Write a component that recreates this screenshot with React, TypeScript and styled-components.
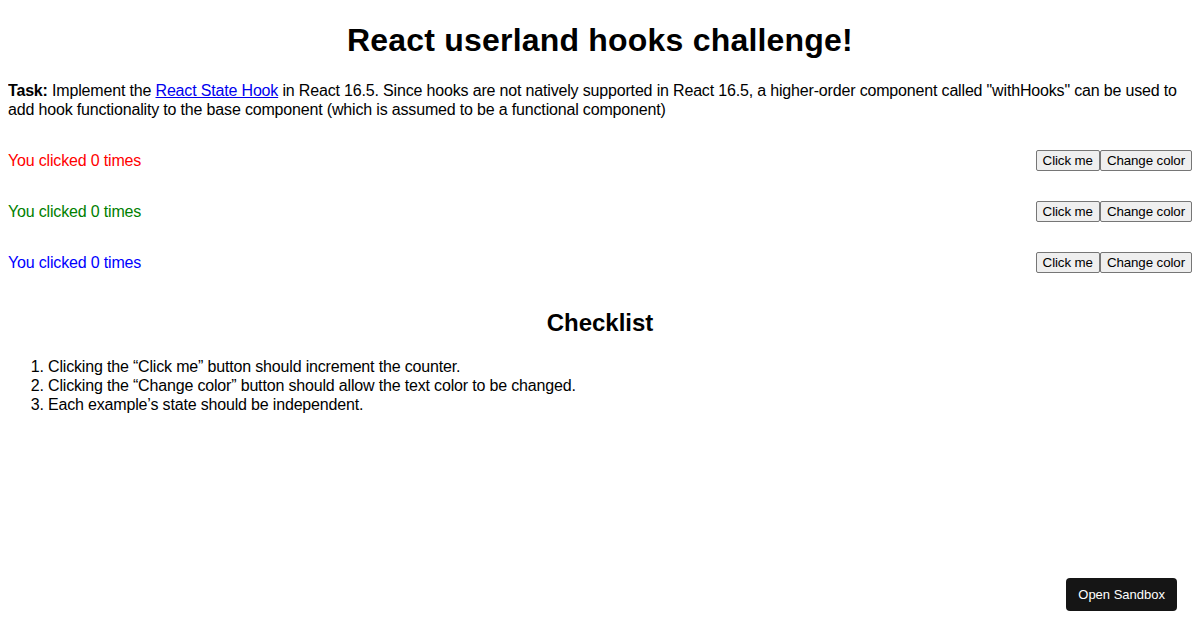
import React, { useState } from "react";
import styled, { createGlobalStyle } from "styled-components";

const GlobalStyle = createGlobalStyle`
  body {
    margin: 8px;
    font-family: "Liberation Sans", Arial, sans-serif;
    font-size: 16px;
    letter-spacing: -0.17px;
    color: #000;
    background: #fff;
  }
`;

const Title = styled.h1`
  text-align: center;
  font-size: 32px;
  letter-spacing: 0.2px;
  margin: 14.44px 0 21.44px;
`;

const Task = styled.p`
  margin: 16px 0;
  line-height: 19px;
`;

const Link = styled.a`
  color: #0000ee;
`;

const Row = styled.div`
  display: flex;
  justify-content: space-between;
  align-items: center;
`;

const Counter = styled.p<{ $color: string }>`
  margin: 16px 0;
  color: ${(p) => p.$color};
  line-height: 19px;
`;

const Buttons = styled.div`
  display: flex;
`;

const Button = styled.button`
  font-family: "Liberation Sans", Arial, sans-serif;
  font-size: 13.333px;
  letter-spacing: -0.1px;
  padding: 2px 6px;
  border: 1px solid #767676;
  border-radius: 2px;
  background: #efefef;
  color: #000;
  line-height: normal;
  cursor: pointer;
`;

const Subtitle = styled.h2`
  text-align: center;
  font-size: 24px;
  letter-spacing: 0;
  margin: 20.92px 0 19.92px;
`;

const List = styled.ol`
  margin: 16px 0;
  padding-left: 40px;
  line-height: 19px;
`;

const SandboxButton = styled.a`
  position: fixed;
  right: 23px;
  bottom: 19px;
  background: #151515;
  color: #fff;
  font-family: "Liberation Sans", Arial, sans-serif;
  font-size: 13px;
  letter-spacing: 0;
  padding: 9px 12px;
  border-radius: 4px;
  text-decoration: none;
  line-height: 15px;
`;

const colors = ["red", "green", "blue"];

function Example({ initial }: { initial: number }) {
  const [count, setCount] = useState(0);
  const [colorIndex, setColorIndex] = useState(initial);
  return (
    <Row>
      <Counter $color={colors[colorIndex]}>You clicked {count} times</Counter>
      <Buttons>
        <Button onClick={() => setCount(count + 1)}>Click me</Button>
        <Button onClick={() => setColorIndex((colorIndex + 1) % colors.length)}>
          Change color
        </Button>
      </Buttons>
    </Row>
  );
}

export default function App() {
  return (
    <>
      <GlobalStyle />
      <Title>React userland hooks challenge!</Title>
      <Task>
        <b>Task:</b> Implement the{" "}
        <Link href="#">React State Hook</Link> in React 16.5. Since hooks are
        not natively supported in React 16.5, a higher-order component called
        "withHooks" can be used to add hook functionality to the base component
        (which is assumed to be a functional component)
      </Task>
      <Example initial={0} />
      <Example initial={1} />
      <Example initial={2} />
      <Subtitle>Checklist</Subtitle>
      <List>
        <li>Clicking the “Click me” button should increment the counter.</li>
        <li>
          Clicking the “Change color” button should allow the text color to be
          changed.
        </li>
        <li>Each example’s state should be independent.</li>
      </List>
      <SandboxButton href="#">Open Sandbox</SandboxButton>
    </>
  );
}
